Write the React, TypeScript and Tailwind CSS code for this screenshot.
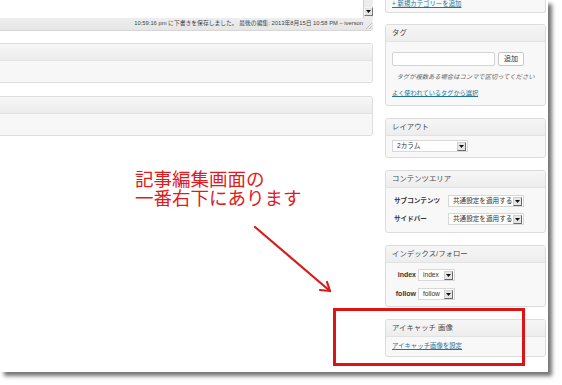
import React from "react";

const FONT = { fontFamily: '"Liberation Sans", "Noto Sans CJK JP", sans-serif' };

function Arrow() {
  return (
    <span className="flex items-center justify-center w-[9px] h-[9px] bg-[#e6e6e6] border border-t-[#d0d0d0] border-l-[#d0d0d0] border-r-[#6a6a6a] border-b-[#6a6a6a] shrink-0">
      <svg width="5" height="3" viewBox="0 0 5 3">
        <path d="M0 0 L5 0 L2.5 3 Z" fill="#111" />
      </svg>
    </span>
  );
}

function Select({ text, className }: { text: string; className: string }) {
  return (
    <div
      className={
        "flex items-center justify-between h-[12px] bg-white border border-[#d8d8d8] pl-[4px] pr-[1px] text-[6.6px] text-[#333] " +
        className
      }
    >
      <span className="leading-none whitespace-nowrap">{text}</span>
      <Arrow />
    </div>
  );
}

function Box({
  title,
  children,
  bodyClass,
}: {
  title: string;
  children: React.ReactNode;
  bodyClass: string;
}) {
  return (
    <div className="border border-[#dcdcdc] rounded-[3px] bg-[#f8f8f8] overflow-hidden">
      <div className="h-[17px] flex items-center px-[6px] text-[7.4px] text-[#4a4a4a] bg-gradient-to-b from-[#f6f6f6] to-[#ededed] border-b border-[#e2e2e2]">
        {title}
      </div>
      <div className={bodyClass}>{children}</div>
    </div>
  );
}

function LeftBox() {
  return (
    <div className="border border-l-0 border-[#dedede] rounded-r-[3px] overflow-hidden">
      <div className="h-[17px] bg-gradient-to-b from-[#f7f7f7] to-[#ececec] border-b border-[#e3e3e3]" />
      <div className="h-[21px] bg-[#f7f7f7]" />
    </div>
  );
}

export default function App() {
  return (
    <div className="w-[562px] h-[385px] bg-white overflow-hidden" style={FONT}>
      <div className="relative w-[548px] h-[372px] bg-white shadow-[4px_4px_4px_rgba(0,0,0,0.55)] flex gap-[12px]">
        {/* Left editor column */}
        <div className="w-[373px] flex flex-col">
          <div className="h-[18px] flex">
            <div className="flex-1 bg-white" />
            <div className="w-[10px] bg-[#ececec] border-l border-[#cfcfcf] flex flex-col justify-end">
              <div className="h-[9px] bg-[#e4e4e4] border border-t-[#f4f4f4] border-l-[#f4f4f4] border-r-[#777] border-b-[#777] flex items-center justify-center mb-[2px]">
                <svg width="5" height="3" viewBox="0 0 5 3">
                  <path d="M0 0 L5 0 L2.5 3 Z" fill="#111" />
                </svg>
              </div>
            </div>
          </div>
          <div className="h-[13px] bg-gradient-to-b from-[#eeeeee] to-[#e6e6e6] border-b border-[#d6d6d6] rounded-br-[3px] flex items-center justify-end pr-[10px] relative">
            <span className="text-[5.8px] text-[#444] whitespace-nowrap leading-none">
              10:59:16 pm に下書きを保存しました。 最後の編集: 2013年8月15日 10:58 PM – iverson
            </span>
            <svg className="absolute right-[1px] bottom-[1px]" width="7" height="7" viewBox="0 0 7 7">
              <path d="M7 1 L1 7 M7 4 L4 7" stroke="#bbb" strokeWidth="0.8" />
            </svg>
          </div>
          <div className="mt-[12px] flex flex-col gap-[13px]">
            <LeftBox />
            <LeftBox />
          </div>
        </div>

        {/* Right sidebar */}
        <div className="w-[161px] flex flex-col">
          <div className="h-[13px] border border-t-0 border-[#dcdcdc] rounded-b-[3px] bg-[#f8f8f8] px-[6px] overflow-hidden">
            <div className="mt-[0px] text-[6.4px] leading-[7px] text-[#21759b] underline whitespace-nowrap">
              + 新規カテゴリーを追加
            </div>
          </div>

          <div className="mt-[11px]">
            <Box title="タグ" bodyClass="px-[6px] pt-[10px] pb-[7px]">
              <div className="flex items-center gap-[3px]">
                <div className="w-[103px] h-[14px] bg-white border border-[#d4d4d4] rounded-[2px]" />
                <div className="w-[26px] h-[14px] bg-white border border-[#c8c8c8] rounded-[2px] flex items-center justify-center text-[7px] text-[#333]">
                  追加
                </div>
              </div>
              <div className="mt-[6px] h-[10px] flex items-center justify-center text-[6.3px] italic text-[#666] whitespace-nowrap">
                タグが複数ある場合はコンマで区切ってください
              </div>
              <div className="mt-[6px] h-[10px] flex items-center text-[6.2px] text-[#21759b] underline whitespace-nowrap">
                よく使われているタグから選択
              </div>
            </Box>
          </div>

          <div className="mt-[12px]">
            <Box title="レイアウト" bodyClass="px-[6px] pt-[4px] pb-[5px]">
              <Select text="2カラム" className="w-[76px]" />
            </Box>
          </div>

          <div className="mt-[12px]">
            <Box title="コンテンツエリア" bodyClass="pl-[8px] pr-[6px] pt-[7px] pb-[7px] flex flex-col gap-[6px]">
              <div className="flex items-center">
                <span className="w-[54px] text-[6.6px] font-bold text-[#333] whitespace-nowrap">サブコンテンツ</span>
                <Select text="共通設定を適用する" className="w-[76px]" />
              </div>
              <div className="flex items-center">
                <span className="w-[54px] text-[6.6px] font-bold text-[#333] whitespace-nowrap">サイドバー</span>
                <Select text="共通設定を適用する" className="w-[76px]" />
              </div>
            </Box>
          </div>

          <div className="mt-[12px]">
            <Box title="インデックス/フォロー" bodyClass="pl-[7px] pr-[6px] pt-[6px] pb-[6px] flex flex-col gap-[7px]">
              <div className="flex items-center">
                <span className="w-[24px] pr-[1px] text-right text-[7px] font-bold text-[#333]">index</span>
                <Select text="index" className="w-[37px] ml-[1px]" />
              </div>
              <div className="flex items-center">
                <span className="w-[24px] pr-[1px] text-right text-[7px] font-bold text-[#333]">follow</span>
                <Select text="follow" className="w-[37px] ml-[1px]" />
              </div>
            </Box>
          </div>

          <div className="mt-[12px]">
            <Box title="アイキャッチ 画像" bodyClass="px-[6px] pt-[4px] pb-[5px]">
              <div className="h-[10px] flex items-center text-[6.4px] text-[#21759b] underline whitespace-nowrap">
                アイキャッチ画像を設定
              </div>
            </Box>
          </div>
        </div>

        {/* Annotations */}
        <div
          className="absolute left-[135px] top-[169px] text-[18.5px] leading-[19px] text-[#e01b1b] whitespace-nowrap"
          style={{ fontFamily: '"Noto Sans CJK JP", sans-serif' }}
        >
          <div>記事編集画面の</div>
          <div>一番右下にあります</div>
        </div>
        <svg className="absolute left-0 top-0" width="548" height="372" viewBox="0 0 548 372">
          <g stroke="#d81c1c" strokeWidth="2.2" strokeLinecap="round" fill="none">
            <line x1="255" y1="227" x2="330" y2="291" />
            <line x1="330" y1="291" x2="327" y2="282" />
            <line x1="330" y1="291" x2="320" y2="290" />
          </g>
        </svg>
        <div className="absolute left-[333px] top-[308px] w-[192px] h-[58px] border-[3px] border-[#dc1414]" />
      </div>
    </div>
  );
}
